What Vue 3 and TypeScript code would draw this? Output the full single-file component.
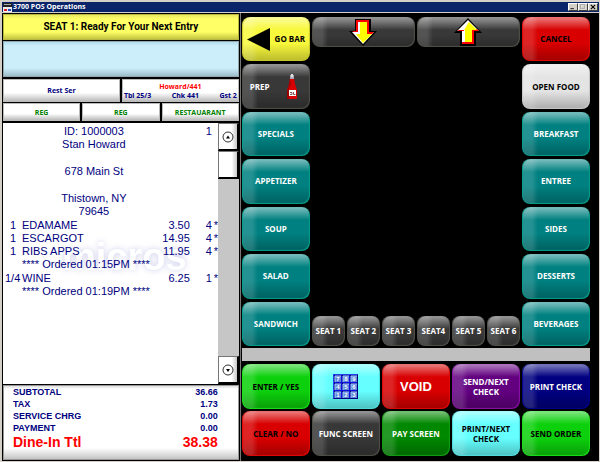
<script setup lang="ts">
interface Key {
  label: string
  tone: string
  icon?: 'back' | 'bottle' | 'keypad'
  big?: boolean
}

interface OrderLine {
  qty: string
  name: string
  price: string
  seat: string
}

interface OrderGroup {
  lines: OrderLine[]
  stamp: string
}

const leftKeys: Key[] = [
  { label: 'GO BAR', tone: 'yellow', icon: 'back' },
  { label: 'PREP', tone: 'gray', icon: 'bottle' },
  { label: 'SPECIALS', tone: 'teal' },
  { label: 'APPETIZER', tone: 'teal' },
  { label: 'SOUP', tone: 'teal' },
  { label: 'SALAD', tone: 'teal' },
  { label: 'SANDWICH', tone: 'teal' },
]

const rightKeys: Key[] = [
  { label: 'CANCEL', tone: 'red' },
  { label: 'OPEN FOOD', tone: 'white' },
  { label: 'BREAKFAST', tone: 'teal' },
  { label: 'ENTREE', tone: 'teal' },
  { label: 'SIDES', tone: 'teal' },
  { label: 'DESSERTS', tone: 'teal' },
  { label: 'BEVERAGES', tone: 'teal' },
]

const seats: string[] = ['SEAT 1', 'SEAT 2', 'SEAT 3', 'SEAT4', 'SEAT 5', 'SEAT 6']

const actionKeys: Key[] = [
  { label: 'ENTER / YES', tone: 'lime' },
  { label: '', tone: 'cyan', icon: 'keypad' },
  { label: 'VOID', tone: 'red pale', big: true },
  { label: 'SEND/NEXT\nCHECK', tone: 'purple' },
  { label: 'PRINT CHECK', tone: 'navy' },
  { label: 'CLEAR / NO', tone: 'red' },
  { label: 'FUNC SCREEN', tone: 'gray' },
  { label: 'PAY SCREEN', tone: 'green' },
  { label: 'PRINT/NEXT\nCHECK', tone: 'cyan' },
  { label: 'SEND ORDER', tone: 'lime' },
]

const tabs: string[] = ['REG', 'REG', 'RESTAUARANT']

const address: string[][] = [['ID: 1000003', 'Stan Howard'], ['678 Main St'], ['Thistown, NY', '79645']]

const orders: OrderGroup[] = [
  {
    lines: [
      { qty: '1', name: 'EDAMAME', price: '3.50', seat: '4' },
      { qty: '1', name: 'ESCARGOT', price: '14.95', seat: '4' },
      { qty: '1', name: 'RIBS APPS', price: '11.95', seat: '4' },
    ],
    stamp: '**** Ordered 01:15PM ****',
  },
  {
    lines: [{ qty: '1/4', name: 'WINE', price: '6.25', seat: '1' }],
    stamp: '**** Ordered 01:19PM ****',
  },
]

const totals: [string, string][] = [
  ['SUBTOTAL', '36.66'],
  ['TAX', '1.73'],
  ['SERVICE CHRG', '0.00'],
  ['PAYMENT', '0.00'],
]

const digits: number[] = [7, 8, 9, 4, 5, 6, 1, 2, 3]
</script>

<template>
  <div class="window">
    <header class="titlebar">
      <svg class="app-icon" viewBox="0 0 9 9" aria-hidden="true">
        <rect width="9" height="4" fill="#222" />
        <rect x="1" y="1" width="7" height="1" fill="#aaa" />
        <rect y="4" width="9" height="5" fill="#eee" />
        <rect x="1" y="6" width="3" height="2" fill="#d22" />
        <rect x="5" y="6" width="3" height="2" fill="#24c" />
      </svg>
      <h1>3700 POS Operations</h1>
      <div class="window-controls">
        <button type="button" aria-label="Minimize">
          <svg viewBox="0 0 8 7"><rect x="1" y="5" width="4" height="1" fill="#000" /></svg>
        </button>
        <button type="button" aria-label="Maximize">
          <svg viewBox="0 0 8 7"><path d="M1.5 1h5v5h-5z" fill="none" stroke="#fff" /><path d="M1 .5h5v5H1z" fill="none" stroke="#999" /></svg>
        </button>
        <button type="button" aria-label="Close">
          <svg viewBox="0 0 8 7"><path d="M1.5 1l5 5M6.5 1l-5 5" stroke="#000" stroke-width="1.3" /></svg>
        </button>
      </div>
    </header>

    <main class="screen">
      <section class="check">
        <div class="prompt">SEAT 1: Ready For Your Next Entry</div>
        <div class="entry"></div>
        <div class="info">
          <div class="cell server">Rest Ser</div>
          <div class="cell detail">
            <span class="owner">Howard/441</span>
            <span class="facts"><span>Tbl 25/3</span><span>Chk 441</span><span>Gst 2</span></span>
          </div>
        </div>
        <div class="tabs">
          <div v-for="(tab, i) in tabs" :key="i" class="cell tab">{{ tab }}</div>
        </div>

        <div class="list">
          <div class="receipt">
            <svg class="watermark" viewBox="0 0 150 44" aria-hidden="true">
              <text x="8" y="36">micros</text>
            </svg>
            <span class="seat-no">1</span>
            <div class="address">
              <p v-for="(block, i) in address" :key="i">
                <span v-for="line in block" :key="line">{{ line }}</span>
              </p>
            </div>
            <div v-for="group in orders" :key="group.stamp" class="group">
              <div v-for="line in group.lines" :key="line.name" class="line">
                <span class="qty" :class="{ fraction: line.qty.includes('/') }">{{ line.qty }}</span>
                <span class="name">{{ line.name }}</span>
                <span class="price">{{ line.price }}</span>
                <span class="seat">{{ line.seat }}</span>
                <span class="star">*</span>
              </div>
              <div class="stamp">{{ group.stamp }}</div>
            </div>
          </div>
          <div class="scroller">
            <button type="button" class="scroll-key" aria-label="Scroll up">
              <svg viewBox="0 0 12 12"><circle cx="6" cy="6" r="5" /><path d="M4 7.500L6 4.500l2 3z" /></svg>
            </button>
            <div class="thumb"></div>
            <button type="button" class="scroll-key down" aria-label="Scroll down">
              <svg viewBox="0 0 12 12"><circle cx="6" cy="6" r="5" /><path d="M4 5l2 3 2-3z" /></svg>
            </button>
          </div>
        </div>

        <dl class="totals">
          <div v-for="[name, value] in totals" :key="name">
            <dt>{{ name }}</dt>
            <dd>{{ value }}</dd>
          </div>
          <div class="due">
            <dt>Dine-In Ttl</dt>
            <dd>38.38</dd>
          </div>
        </dl>
      </section>

      <section class="keys">
        <div class="upper">
          <div class="stack">
            <button v-for="key in leftKeys" :key="key.label" type="button" class="key" :class="[key.tone, key.icon]">
              <svg v-if="key.icon === 'back'" class="back-icon" viewBox="0 0 23 23" aria-hidden="true">
                <path d="M0 11.500L23 0v23z" />
              </svg>
              <span>{{ key.label }}</span>
              <svg v-if="key.icon === 'bottle'" class="bottle-icon" viewBox="0 0 12 26" aria-hidden="true">
                <path d="M4 4h4l1 6 2 6v9H1v-9l2-6z" fill="#d80000" />
                <path d="M4 6l-1 5-2 6v8h2V15l2-6z" fill="#900" />
                <rect x="4" y="1" width="4" height="4" fill="#aab" />
                <rect x="5" y="0" width="2" height="3" fill="#ddd" />
                <rect x="3" y="16" width="7" height="6" fill="#fff" />
                <path d="M4 18.500h2v2H4M7.500 18v2.500h2" fill="none" stroke="#855" />
              </svg>
            </button>
          </div>

          <div class="center">
            <div class="arrows">
              <button type="button" class="key gray" aria-label="Page down">
                <svg class="arrow-icon" viewBox="0 0 28 28" aria-hidden="true">
                  <path d="M6 1h16v12h6L14 28 0 13h6z" fill="#000" />
                  <path d="M7 2h13v12h5L14 26 3 14h4z" fill="#fff" />
                  <path d="M7 2h13v12h5l-2 2h-5V4H9v10H5l-2-1h4z" fill="#f00" />
                  <path d="M11 4h7v12h5l-9 9-7-9h4z" fill="#ff0" />
                </svg>
              </button>
              <button type="button" class="key gray" aria-label="Page up">
                <svg class="arrow-icon" viewBox="0 0 28 28" aria-hidden="true">
                  <path d="M6 28h16V15h6L14 0 0 15h6z" fill="#000" />
                  <path d="M8 26h12V13h5L14 2 3 13h5z" fill="#fff" />
                  <path d="M3 13h5v13h12V13h5l-2-2h-5v13h-8V12H5z" fill="#f00" />
                  <path d="M8 13h2v11H8z" fill="#fff" />
                  <path d="M11 24h7V12h5l-8-8-5 8h1z" fill="#ff0" />
                </svg>
              </button>
            </div>
            <div class="seats">
              <button v-for="seat in seats" :key="seat" type="button" class="key gray">{{ seat }}</button>
            </div>
          </div>

          <div class="stack">
            <button v-for="key in rightKeys" :key="key.label" type="button" class="key" :class="key.tone">
              {{ key.label }}
            </button>
          </div>
        </div>

        <div class="divider"></div>

        <div class="actions">
          <button
            v-for="key in actionKeys"
            :key="key.label"
            type="button"
            class="key"
            :class="[key.tone, { big: key.big }]"
            :aria-label="key.label || 'Keypad'"
          >
            <svg v-if="key.icon === 'keypad'" class="keypad-icon" viewBox="0 0 25 25" aria-hidden="true">
              <path d="M0 0h25v25H0z" fill="#000080" />
              <path d="M0 0h25l-1 1H1v23l-1 1z" fill="#2040f0" />
              <path d="M1 8.500h23M1 16.500h23M8.500 1v23M16.500 1v23" stroke="#1010e0" />
              <g v-for="(d, i) in digits" :key="d" :transform="`translate(${2 + (i % 3) * 8} ${2 + Math.floor(i / 3) * 8})`">
                <rect width="6" height="6" fill="#5a86dc" />
                <path d="M0 6V0h6" fill="none" stroke="#a8d0ff" />
                <text x="3" y="5">{{ d }}</text>
              </g>
            </svg>
            <span v-else>{{ key.label }}</span>
          </button>
        </div>
      </section>
    </main>
  </div>
</template>

<style>
body {
  margin: 0;
}
</style>

<style scoped>
.window {
  display: flex;
  flex-direction: column;
  min-height: 100vh;
  box-sizing: border-box;
  padding: 2px 1px 1px 2px;
  background: #d4d0c8;
  font-family: "Liberation Sans", Arial, sans-serif;
}

button {
  margin: 0;
  padding: 0;
  border: 0;
  font: inherit;
}

.titlebar {
  display: flex;
  align-items: center;
  height: 10px;
  padding: 0 1px;
  margin-bottom: 1px;
  background: #0a246a;
  color: #fff;
}

.app-icon {
  width: 9px;
  height: 9px;
  margin-right: 1px;
}

h1 {
  flex: 1;
  margin: 0;
  font: bold 7px/10px "Open Sans", sans-serif;
}

.window-controls {
  display: flex;
}

.window-controls button {
  display: flex;
  width: 10px;
  height: 8px;
  background: #d4d0c8;
  border: 1px solid;
  border-color: #fff #404040 #404040 #fff;
  box-sizing: border-box;
}

.window-controls svg {
  width: 8px;
  height: 6px;
}

.screen {
  flex: 1;
  display: grid;
  grid-template-columns: 2fr 3fr;
  background: #000;
}

.check {
  display: flex;
  flex-direction: column;
  gap: 1px;
  padding: 1px;
  border-right: 1px solid #777;
  color: #000080;
}

.prompt,
.entry,
.cell {
  display: flex;
  align-items: center;
  justify-content: center;
  box-sizing: border-box;
}

.prompt {
  height: 26px;
  background: linear-gradient(#e8e860, #ffff66 4px, #ffff66 17px, #c4c440);
  border: 1px solid #b8b840;
  color: #000;
  font: bold 10px/12px Roboto, sans-serif;
}

.entry {
  height: 36px;
  margin-bottom: 1px;
  background: linear-gradient(#b4dcec, #cceefa 4px, #cceefa 26px, #9cbcc8);
  border: 1px solid #90a8b0;
}

.info,
.tabs {
  display: grid;
  gap: 2px;
}

.info {
  grid-template-columns: 1fr 1fr;
  height: 23px;
}

.tabs {
  grid-template-columns: 1fr 1fr 1fr;
  height: 18px;
  margin-bottom: 1px;
}

.cell {
  background: linear-gradient(#fff 60%, #bcbcbc);
  border: 1px solid #bbb;
  font: bold 7px/9px "Open Sans", sans-serif;
}

.detail {
  flex-direction: column;
}

.owner {
  color: #f00;
}

.facts {
  align-self: stretch;
  display: flex;
  justify-content: space-between;
  padding: 0 1px;
}

.tab {
  color: #008000;
}

.list {
  flex: 1;
  display: flex;
  padding-left: 1px;
  background: #fff;
  font-size: 11px;
  line-height: 13px;
}

.receipt {
  flex: 1;
  position: relative;
  padding-top: 2px;
}

.receipt > * {
  position: relative;
}

.receipt .watermark {
  position: absolute;
  left: 50px;
  top: 111px;
  width: 150px;
  height: 44px;
}

.watermark text {
  font: bold 38px "Liberation Sans", sans-serif;
  fill: #fff;
  filter: drop-shadow(0 0 3px #ccccec);
}

.receipt .seat-no {
  position: absolute;
  right: 6px;
}

.address {
  display: flex;
  flex-direction: column;
  gap: 14px;
  padding-right: 34px;
  text-align: center;
}

.address p {
  display: flex;
  flex-direction: column;
  margin: 0;
}

.group {
  margin-top: 1px;
}

.line {
  display: grid;
  grid-template-columns: 18px 1fr 40px 22px 6px;
}

.qty {
  padding-left: 6px;
}

.fraction {
  padding-left: 1px;
}

.price,
.seat {
  text-align: right;
}

.star {
  overflow: hidden;
  padding-left: 2px;
}

.stamp {
  padding-left: 18px;
}

.scroller {
  display: flex;
  flex-direction: column;
  width: 21px;
  background: #c6c6c6;
}

.scroll-key,
.thumb {
  height: 28px;
  box-sizing: border-box;
  background: linear-gradient(90deg, #fff 70%, #c8c8c8);
  border: 1px solid #777;
  border-right: 2px solid #000;
  border-bottom: 2px solid #000;
}

.scroll-key {
  display: grid;
  place-items: center;
}

.scroll-key svg {
  width: 12px;
  height: 12px;
}

.scroll-key circle {
  fill: none;
  stroke: #333;
}

.down {
  margin-top: auto;
}

.totals {
  margin: 0;
  padding: 0 20px 9px 9px;
  background: linear-gradient(#ddd, #fff 3px, #fff 62px, #c4c4c4);
  border: 1px solid #999;
  font-size: 9px;
  font-weight: bold;
  line-height: 12px;
}

.totals div {
  display: flex;
  justify-content: space-between;
}

.totals dd {
  margin: 0;
}

.totals .due {
  color: #f00;
  font-size: 14px;
  line-height: 16px;
}

.keys {
  display: flex;
  flex-direction: column;
  padding: 4px 9px 5px 1px;
  font: bold 8px/10px "Open Sans", sans-serif;
}

.upper {
  flex: 1;
  display: grid;
  grid-template-columns: minmax(0, 68fr) minmax(0, 208fr) minmax(0, 68fr);
  gap: 2px;
}

.stack {
  display: flex;
  flex-direction: column;
  gap: 3px;
}

.stack .key {
  flex: 1;
}

.center {
  display: flex;
  flex-direction: column;
  justify-content: space-between;
}

.arrows,
.seats {
  display: grid;
  gap: 2px;
}

.arrows {
  grid-template-columns: 1fr 1fr;
}

.seats {
  grid-template-columns: repeat(6, minmax(0, 1fr));
}

.arrows .key,
.seats .key {
  height: 30px;
}

.key {
  --base: #008080;
  --edge: #00a08c;
  display: flex;
  align-items: center;
  justify-content: center;
  min-width: 0;
  box-sizing: border-box;
  border-radius: 8px;
  color: #fff;
  text-align: center;
  white-space: pre;
  background:
    linear-gradient(rgba(255, 255, 255, 0.5), rgba(255, 255, 255, 0) 13px),
    linear-gradient(90deg, rgba(255, 255, 255, 0.14) 10px, rgba(255, 255, 255, 0) 16px),
    linear-gradient(rgba(0, 0, 0, 0) 60%, rgba(0, 0, 0, 0.25)),
    var(--base);
  box-shadow: inset -1px -1px 1px var(--edge), inset 1px 0 1px var(--edge);
}

.yellow { --base: #f8f83c; --edge: #c8c82c; color: #000; }
.gray { --base: #383838; --edge: #50504a; }
.red { --base: #d80000; --edge: #e00808; color: #000; }
.white { --base: #e4e4e4; --edge: #c8c8c8; color: #000; }
.lime { --base: #0cd00c; --edge: #18e018; color: #000; }
.cyan { --base: #66ffff; --edge: #50dcdc; color: #000; }
.purple { --base: #620080; --edge: #8c10a8; }
.navy { --base: #000080; --edge: #000090; }
.green { --base: #008800; --edge: #10a010; }
.pale { color: #fff; }

.big {
  font: bold 13px/14px "Liberation Sans", Arial, sans-serif;
}

.back {
  gap: 5px;
}

.bottle {
  justify-content: space-between;
  padding: 0 12px 0 8px;
}

.back-icon {
  width: 23px;
  height: 23px;
}

.bottle-icon {
  width: 12px;
  height: 26px;
}

.arrow-icon {
  width: 28px;
  height: 28px;
}

.keypad-icon {
  width: 25px;
  height: 25px;
}

.keypad-icon text {
  font: bold 6px "Liberation Sans", sans-serif;
  fill: #fff;
  text-anchor: middle;
}

.divider {
  height: 13px;
  margin: 2px 0 3px;
  background: #c0c0c0;
}

.actions {
  display: grid;
  grid-template-columns: repeat(5, minmax(0, 1fr));
  grid-auto-rows: 45px;
  gap: 2px;
}
</style>
